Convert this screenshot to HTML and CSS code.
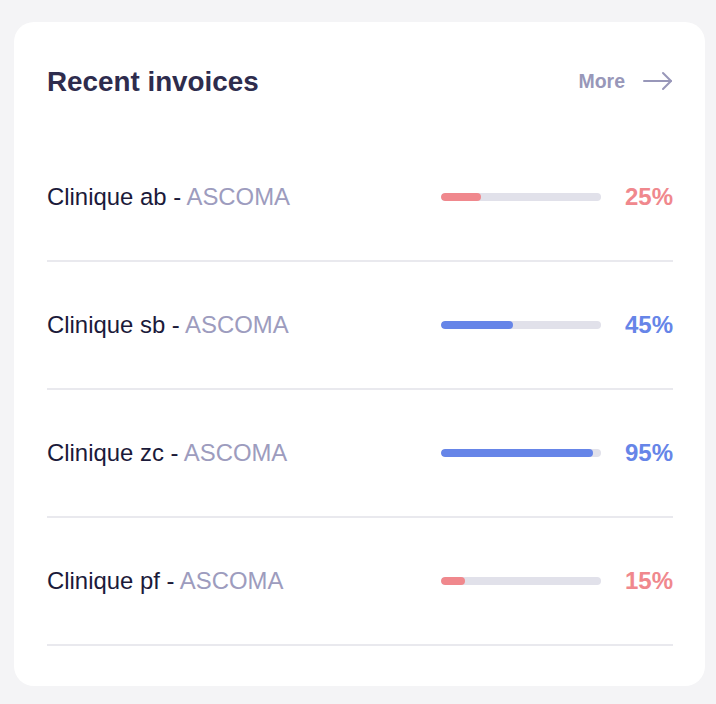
FILE: index.html
```html
<!DOCTYPE html>
<html lang="en">
<head>
<meta charset="utf-8">
<title>Recent invoices</title>
<link rel="stylesheet" href="styles.css">
</head>
<body>
<div class="card">
  <div class="header">
    <h2 class="title">Recent invoices</h2>
    <a class="more" href="#">More
      <svg class="arrow" width="30" height="20" viewBox="0 0 30 20" fill="none" stroke="currentColor" stroke-width="2" stroke-linecap="round" stroke-linejoin="round"><path d="M1 10H28"/><path d="M20 2L28 10L20 18"/></svg>
    </a>
  </div>
  <ul class="list">
    <li class="row">
      <span class="name">Clinique ab - <span class="org">ASCOMA</span></span>
      <span class="track"><span class="fill fill-red" style="width:25%"></span></span>
      <span class="pct pct-red">25%</span>
    </li>
    <li class="row">
      <span class="name">Clinique sb - <span class="org">ASCOMA</span></span>
      <span class="track"><span class="fill fill-blue" style="width:45%"></span></span>
      <span class="pct pct-blue">45%</span>
    </li>
    <li class="row">
      <span class="name">Clinique zc - <span class="org">ASCOMA</span></span>
      <span class="track"><span class="fill fill-blue" style="width:95%"></span></span>
      <span class="pct pct-blue">95%</span>
    </li>
    <li class="row">
      <span class="name">Clinique pf - <span class="org">ASCOMA</span></span>
      <span class="track"><span class="fill fill-red" style="width:15%"></span></span>
      <span class="pct pct-red">15%</span>
    </li>
  </ul>
</div>
</body>
</html>
```
FILE: styles.css
```css
html, body {
  margin: 0;
  padding: 0;
}
body {
  background: #f4f4f6;
  font-family: "Liberation Sans", Arial, sans-serif;
  padding: 22px 11px 18px 14px;
}
.card {
  background: #ffffff;
  border-radius: 20px;
  padding: 38px 32px 40px 33px;
}
.header {
  display: flex;
  align-items: center;
  justify-content: space-between;
  height: 44px;
  margin-bottom: 30px;
}
.title {
  margin: 0;
  font-size: 27.8px;
  font-weight: 700;
  color: #2e2c4d;
}
.more {
  display: flex;
  align-items: center;
  gap: 18px;
  text-decoration: none;
  font-size: 19.5px;
  font-weight: 700;
  color: #9897b9;
  margin-top: -2px;
}
.arrow {
  display: block;
}
.list {
  list-style: none;
  margin: 0;
  padding: 0;
}
.row {
  display: flex;
  align-items: center;
  height: 126px;
  border-bottom: 2px solid #e9e9ee;
}
.name {
  flex: 1;
  font-size: 23.9px;
  color: #1b1a3a;
}
.org {
  color: #9d9cbe;
}
.track {
  width: 160px;
  height: 8px;
  border-radius: 4px;
  background: #e1e1ea;
  overflow: hidden;
}
.fill {
  display: block;
  height: 100%;
  border-radius: 4px;
}
.fill-red { background: #f0888d; }
.fill-blue { background: #6685e8; }
.pct {
  width: 72px;
  text-align: right;
  font-size: 24px;
  font-weight: 700;
}
.pct-red { color: #f0888d; }
.pct-blue { color: #6685e8; }
```
